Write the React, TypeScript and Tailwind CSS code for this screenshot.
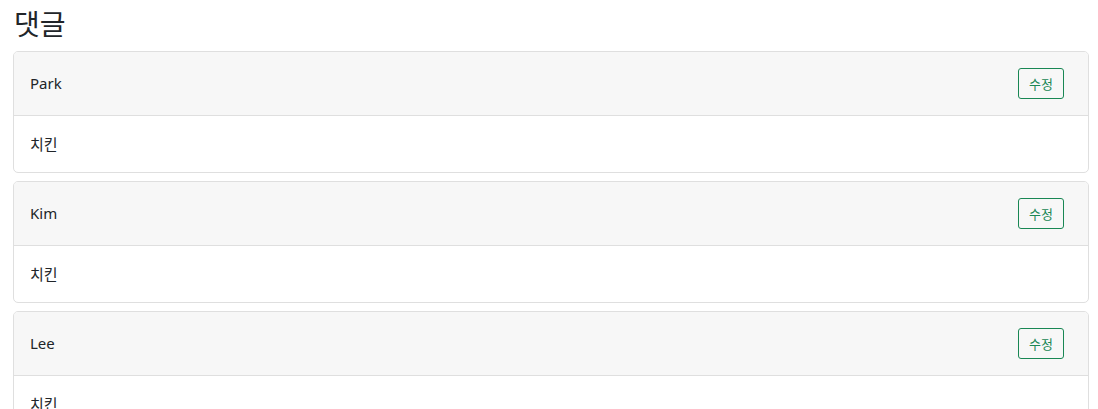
import React from "react";

const comments = [
  { name: "Park", body: "치킨" },
  { name: "Kim", body: "치킨" },
  { name: "Lee", body: "치킨" },
];

export default function App() {
  return (
    <div
      className="pl-[13px] pr-[9px] pt-[7px] text-[#212529] bg-white"
      style={{ fontFamily: '"Noto Sans", "Noto Sans CJK KR", sans-serif' }}
    >
      <h3 className="text-[28px] leading-[1.2] font-normal mb-[10px] pl-[1px]" style={{ fontFamily: '"Noto Sans CJK KR", sans-serif' }}>
        댓글
      </h3>
      <div className="flex flex-col gap-2">
        {comments.map((c) => (
          <div key={c.name} className="border border-[#dfdfdf] rounded-[5px] overflow-hidden">
            <div className="bg-[#f7f7f7] border-b border-[#dfdfdf] h-[64px] pl-4 pr-[24px] flex items-center justify-between">
              <span className="text-[15px] leading-6">{c.name}</span>
              <button
                className="border border-[#198754] text-[#198754] rounded-[3px] h-[31px] w-[46px] text-[13px] leading-none flex items-center justify-center bg-transparent"
                style={{ fontFamily: '"Noto Sans CJK KR", sans-serif' }}
              >
                수정
              </button>
            </div>
            <div className="px-4 h-[56px] flex items-center">
              <span className="text-[15px] leading-6" style={{ fontFamily: '"Noto Sans CJK KR", sans-serif' }}>
                {c.body}
              </span>
            </div>
          </div>
        ))}
      </div>
    </div>
  );
}
